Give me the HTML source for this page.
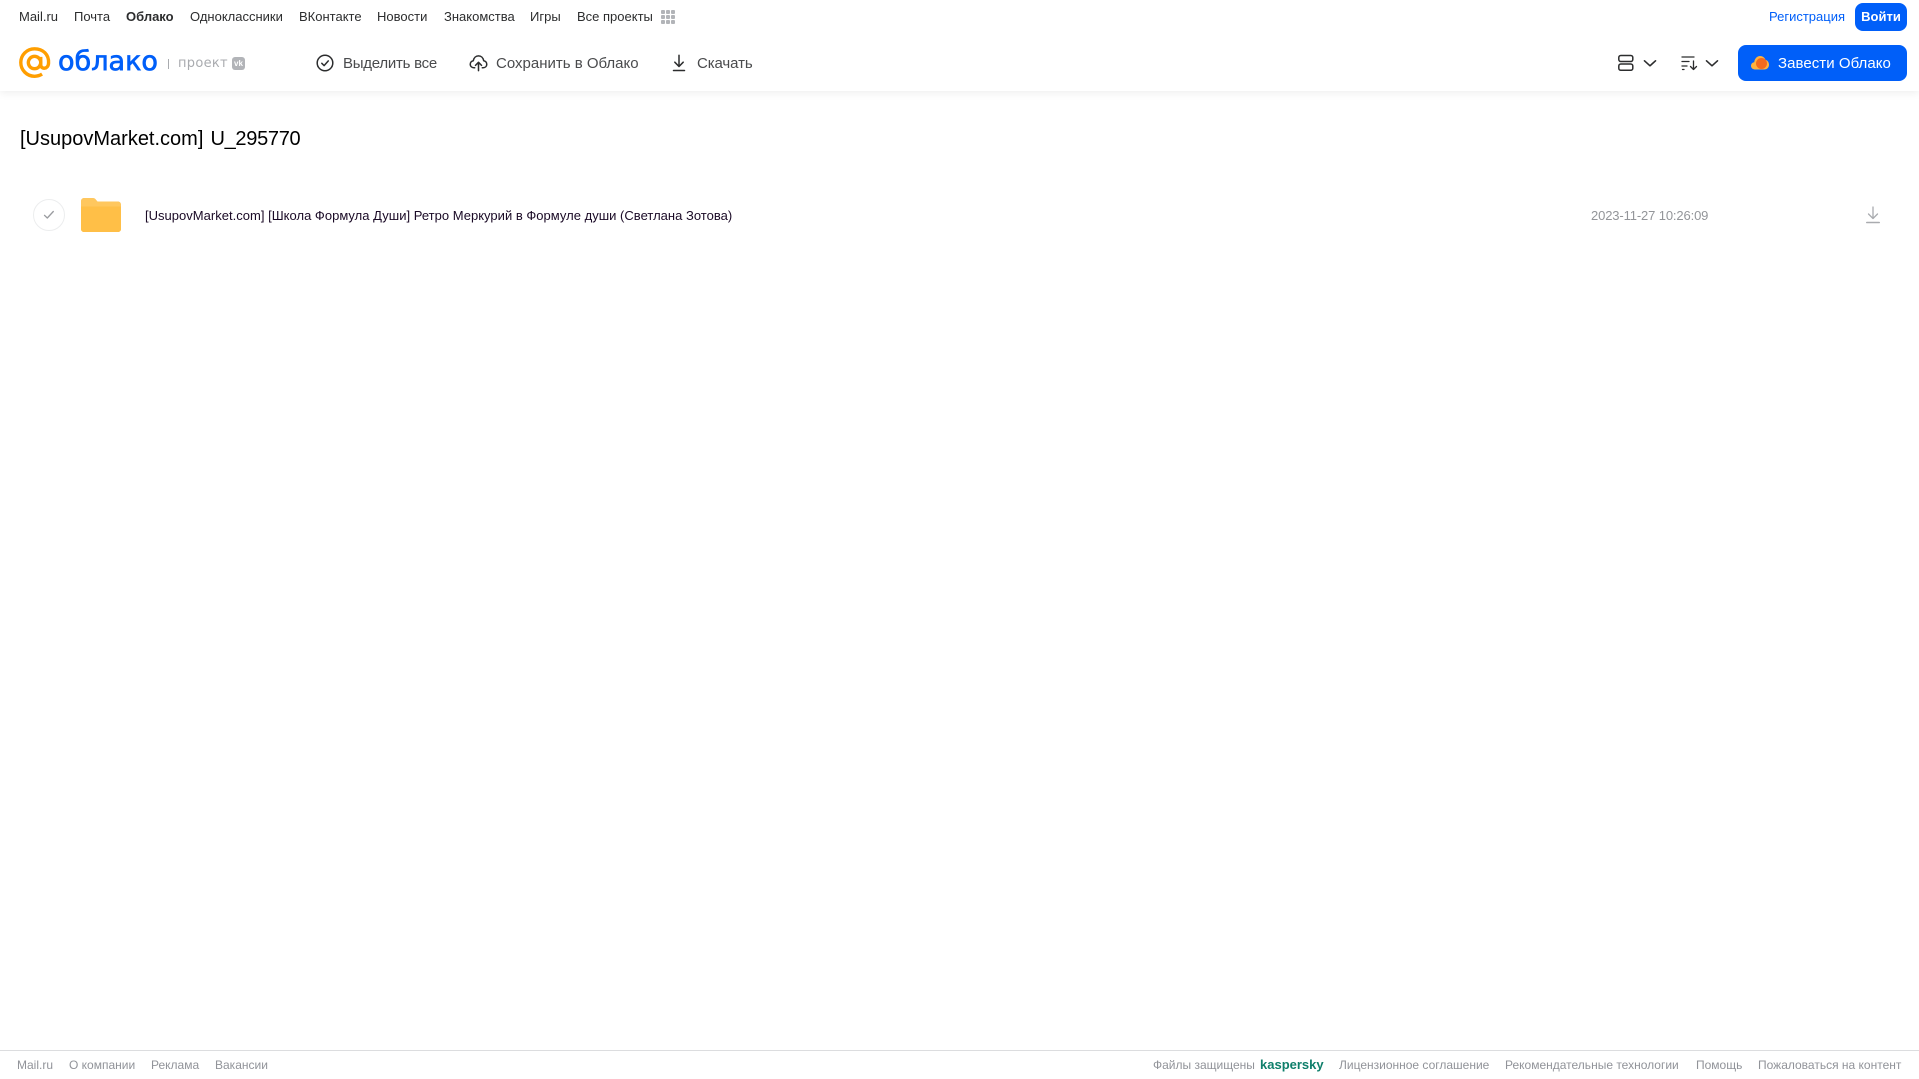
<!DOCTYPE html>
<html lang="ru"><head><meta charset="utf-8"><title>Облако</title>
<style>
html,body{margin:0;padding:0;background:#fff;width:1919px;height:1079px;overflow:hidden}
body{font-family:"Liberation Sans",Arial,sans-serif;position:relative}
.a{position:absolute;white-space:nowrap}
.t{font-size:13px;line-height:16px;top:9px;color:#2c2d2e}
.h{font-size:15px;line-height:18px;top:55px;color:#4a4b4d}
.f{font-size:12px;line-height:14px;top:1058px;color:#919399}
svg{position:absolute;overflow:visible}
</style></head><body>
<div class="a" style="left:0;top:0;width:1919px;height:91px;background:#fff;box-shadow:0 2px 8px rgba(0,0,0,.07)"></div>

<span class="a t" style="left:19px">Mail.ru</span>
<span class="a t" style="left:74px">Почта</span>
<span class="a t" style="left:126px;font-weight:bold">Облако</span>
<span class="a t" style="left:190px">Одноклассники</span>
<span class="a t" style="left:299px">ВКонтакте</span>
<span class="a t" style="left:377px">Новости</span>
<span class="a t" style="left:444px">Знакомства</span>
<span class="a t" style="left:530px">Игры</span>
<span class="a t" style="left:577px">Все проекты</span>
<svg style="left:661px;top:10px" width="15" height="15" fill="#b2b4b8"><rect width="4" height="4" rx="1"/><rect x="5" width="4" height="4" rx="1"/><rect x="10" width="4" height="4" rx="1"/><rect y="5" width="4" height="4" rx="1"/><rect x="5" y="5" width="4" height="4" rx="1"/><rect x="10" y="5" width="4" height="4" rx="1"/><rect y="10" width="4" height="4" rx="1"/><rect x="5" y="10" width="4" height="4" rx="1"/><rect x="10" y="10" width="4" height="4" rx="1"/></svg>

<span class="a t" style="left:1769px;color:#005ff9">Регистрация</span>
<div class="a" style="left:1855px;top:3px;width:52px;height:28px;border-radius:8px;background:#005ff9;color:#fff;font-size:13px;font-weight:bold;line-height:27px;text-align:center">Войти</div>

<svg style="left:19px;top:47px" width="32" height="32" viewBox="0 0 34 34" fill="none" stroke="#ff9e00" stroke-width="3.6"><circle cx="16.5" cy="16.5" r="6.6"/><path d="M23.1 10.5v8.2c0 5.4 7.9 5.4 8.3-1.6C31.900 8 25.500 1.900 16.500 1.900 8.400 1.900 1.900 8.400 1.900 16.500s6.500 14.600 14.600 14.600c3.200 0 5.700-.8 8-2.300"/></svg>
<svg style="left:56px;top:40px" width="106" height="44"><text x="2" y="30" font-family="'DejaVu Sans',sans-serif" font-size="27" fill="#005ff9" stroke="#005ff9" stroke-width=".7" textLength="100" lengthAdjust="spacingAndGlyphs">облако</text></svg>
<div class="a" style="left:168px;top:59px;width:1px;height:10px;background:#a9abaf"></div>
<span class="a" style="left:178px;top:55px;font-family:'DejaVu Sans',sans-serif;font-size:13px;line-height:18px;color:#a9abaf;letter-spacing:.3px">проект</span>
<div class="a" style="left:232px;top:57px;width:13px;height:13px;border-radius:3px;background:#b2b4b8;color:#fff;font-size:8px;font-weight:bold;line-height:13px;text-align:center">vk</div>

<svg style="left:315px;top:53px" width="20" height="20" fill="none" stroke="#2c2d2e" stroke-width="1.5" stroke-linecap="round" stroke-linejoin="round"><circle cx="10" cy="10" r="7.800"/><path d="M6.800 10.300l2.300 2.300 4.200-4.700"/></svg>
<span class="a h" style="left:343px;letter-spacing:-.25px">Выделить все</span>
<svg style="left:469px;top:54px" width="19" height="18" viewBox="0 0 20 18" fill="none" stroke="#2c2d2e" stroke-width="1.600" stroke-linecap="round" stroke-linejoin="round"><path d="M6 14H5.200C2.900 14 1.300 12.400 1.300 10.300c0-1.900 1.400-3.400 3.200-3.700C5.100 3.500 7.300 1.500 10 1.500s4.900 2 5.500 5.100c1.800.3 3.200 1.800 3.200 3.700 0 2.100-1.600 3.700-3.900 3.700H14"/><path d="M10 17V8.500M6.800 11.500L10 8.300l3.200 3.200"/></svg>
<span class="a h" style="left:496px">Сохранить в Облако</span>
<svg style="left:671px;top:54px" width="16" height="18" fill="none" stroke="#2c2d2e" stroke-width="1.500" stroke-linecap="round" stroke-linejoin="round"><path d="M8 1.200v11M3.800 8.200L8 12.500l4.200-4.300"/><path d="M2.500 16.500h11"/></svg>
<span class="a h" style="left:697px;letter-spacing:-.1px">Скачать</span>

<svg style="left:1618px;top:54px" width="18" height="18" fill="none" stroke="#2c2d2e" stroke-width="1.500"><rect x=".8" y="1.500" width="14" height="6" rx="2"/><rect x=".8" y="10" width="14" height="6.300" rx="2"/></svg>
<svg style="left:1643px;top:59px" width="14" height="9" fill="none" stroke="#2c2d2e" stroke-width="1.600" stroke-linecap="round" stroke-linejoin="round"><path d="M1.500 1.800L7 6.800l5.500-5"/></svg>
<svg style="left:1681px;top:55px" width="18" height="16" fill="none" stroke="#2c2d2e" stroke-width="1.300" stroke-linecap="round" stroke-linejoin="round"><path d="M1 2h12M1 6.500h7M1 11h5M1.500 14.500h1.500"/><path d="M12.500 6v8.500M9.500 11.500l3 3 3-3"/></svg>
<svg style="left:1705px;top:59px" width="14" height="9" fill="none" stroke="#2c2d2e" stroke-width="1.600" stroke-linecap="round" stroke-linejoin="round"><path d="M1.500 1.800L7 6.800l5.500-5"/></svg>

<div class="a" style="left:1738px;top:45px;width:169px;height:36px;border-radius:8px;background:#005ff9"></div>
<svg style="left:1750px;top:54px" width="20" height="17"><path d="M5 15.500C2.600 15.500 1 13.900 1 11.800c0-2 1.300-3.400 3.200-3.600C4.800 4.500 7 2 10 2c2.600 0 4.600 1.500 5.500 3.900 2.200.5 3.500 2.500 3.500 4.900 0 2.800-2 4.700-4.800 4.700z" fill="#ffb23e"/><circle cx="11.500" cy="9.500" r="5.500" fill="#f26a1f"/></svg>
<span class="a" style="left:1778px;top:55px;font-size:15px;line-height:18px;color:#fff;letter-spacing:.05px">Завести Облако</span>

<div class="a" style="left:20px;top:126px;font-size:20px;line-height:26px;color:#000">[UsupovMarket.com] <span style="letter-spacing:-.3px;margin-left:1.500px">U_295770</span></div>

<div class="a" style="left:33px;top:199px;width:30px;height:30px;border:1px solid #ecedee;border-radius:50%"></div>
<svg style="left:43px;top:210px" width="12" height="10" fill="none" stroke="#999b9f" stroke-width="1.300" stroke-linecap="round" stroke-linejoin="round"><path d="M1.500 5.300l2.800 2.700 6-6.500"/></svg>
<svg style="left:81px;top:198px" width="40" height="34"><path d="M0 3C0 1.300 1.300 0 3 0h9c1.500 0 2.300.7 3 1.800L16.500 3.500H37c1.700 0 3 1.300 3 3V31c0 1.700-1.300 3-3 3H3c-1.700 0-3-1.300-3-3z" fill="#ffc75e"/><path d="M0 8.500h40V31c0 1.700-1.300 3-3 3H3c-1.700 0-3-1.300-3-3z" fill="#ffbf47"/></svg>
<div class="a" style="left:145px;top:207px;font-size:13px;line-height:17px;color:#1a0a26;letter-spacing:.015px">[UsupovMarket.com] [Школа Формула Души] Ретро Меркурий в Формуле души (Светлана Зотова)</div>
<div class="a" style="left:1591px;top:207px;font-size:13px;line-height:17px;color:#939599;letter-spacing:-.13px">2023-11-27 10:26:09</div>
<svg style="left:1865px;top:206px" width="16" height="18" fill="none" stroke="#a9abaf" stroke-width="1.300" stroke-linecap="round" stroke-linejoin="round"><path d="M8 1v11.500M3.500 8L8 12.500 12.500 8"/><path d="M1.800 16.500h12.400" stroke-width="1.600"/></svg>

<div class="a" style="left:0;top:1050px;width:1919px;height:1px;background:#dcdddf"></div>
<span class="a f" style="left:17px">Mail.ru</span>
<span class="a f" style="left:69px">О компании</span>
<span class="a f" style="left:151px">Реклама</span>
<span class="a f" style="left:215px">Вакансии</span>
<span class="a f" style="left:1153px">Файлы защищены</span>
<span class="a" style="left:1260px;top:1057px;font-size:13px;line-height:15px;font-weight:bold;color:#0f7f6b">kaspersky</span>
<span class="a f" style="left:1339px">Лицензионное соглашение</span>
<span class="a f" style="left:1505px">Рекомендательные технологии</span>
<span class="a f" style="left:1696px">Помощь</span>
<span class="a f" style="left:1758px">Пожаловаться на контент</span>
</body></html>
